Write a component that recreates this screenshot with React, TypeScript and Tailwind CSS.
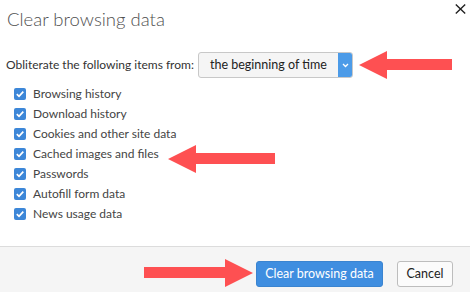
import React from "react";

const items = [
  "Browsing history",
  "Download history",
  "Cookies and other site data",
  "Cached images and files",
  "Passwords",
  "Autofill form data",
  "News usage data",
];

function Check() {
  return (
    <span className="w-[12px] h-[12px] rounded-[2px] bg-[#3d87d8] flex items-center justify-center shrink-0">
      <svg width="10" height="10" viewBox="0 0 10 10">
        <path d="M1.8 5.2 L4 7.3 L8.3 2.6" fill="none" stroke="white" strokeWidth="1.7" />
      </svg>
    </span>
  );
}

function Arrow({ left, top, w, flip }: { left: number; top: number; w: number; flip?: boolean }) {
  const head = 28;
  return (
    <svg className="absolute" style={{ left, top }} width={w} height={28} viewBox={`0 0 ${w} 28`}>
      {flip ? (
        <path d={`M0 14 L${head} 0 L${head} 8 L${w} 8 L${w} 19 L${head} 19 L${head} 28 Z`} fill="#fe5052" />
      ) : (
        <path d={`M${w} 14 L${w - head} 0 L${w - head} 8 L0 8 L0 19 L${w - head} 19 L${w - head} 28 Z`} fill="#fe5052" />
      )}
    </svg>
  );
}

export default function App() {
  return (
    <div
      className="relative w-[470px] h-[292px] bg-white flex flex-col overflow-hidden text-[#333]"
      style={{ fontFamily: 'Lato, "Noto Sans", sans-serif' }}
    >
      <div className="relative h-[44px] pl-[7px] pt-[7px]">
        <div className="text-[18.5px] leading-[24px] font-light text-[#505050]">Clear browsing data</div>
        <svg className="absolute left-[455px] top-[4px]" width="11" height="10" viewBox="0 0 11 10">
          <path d="M0.8 0.5 L10.2 9.5 M10.2 0.5 L0.8 9.5" stroke="#222" strokeWidth="1.4" />
        </svg>
      </div>
      <div className="flex items-center pl-[6px] mt-[8px] h-[26px]">
        <span className="text-[12px] leading-[16px] text-[#333] w-[192px] whitespace-nowrap">Obliterate the following items from:</span>
        <div className="flex h-[26px] w-[155px] border border-[#c8c8c8] rounded-[3px] bg-[#f5f5f5] overflow-hidden">
          <div className="flex-1 flex items-center pl-[11px] text-[12.5px] text-[#222]">the beginning of time</div>
          <div className="w-[14px] bg-[#4c9be8] flex items-center justify-center">
            <svg width="7" height="5" viewBox="0 0 7 5">
              <path d="M1 1 L3.5 3.5 L6 1" fill="none" stroke="white" strokeWidth="1.3" />
            </svg>
          </div>
        </div>
      </div>
      <div className="flex flex-col mt-[6px] pl-[14px]">
        {items.map((t) => (
          <div key={t} className="flex items-center h-[20px] gap-[7px]">
            <Check />
            <span className="text-[12px] text-[#444]">{t}</span>
          </div>
        ))}
      </div>
      <div className="flex-1" />
      <div className="h-[46px] border-t border-[#dcdcdc] bg-[#f5f5f5] flex items-start justify-end pt-[14px] pr-[17px] gap-[14px]">
        <button className="h-[26px] w-[127px] rounded-[3px] bg-[#3f8ee0] border border-[#3a84d0] text-white text-[12.5px]">
          Clear browsing data
        </button>
        <button className="h-[26px] w-[56px] rounded-[3px] bg-[#fbfbfb] border border-[#bdbdbd] text-[#222] text-[12.5px]">
          Cancel
        </button>
      </div>
      <Arrow left={359} top={51} w={93} flip />
      <Arrow left={168} top={145} w={107} flip />
      <Arrow left={144} top={259} w={109} />
    </div>
  );
}
